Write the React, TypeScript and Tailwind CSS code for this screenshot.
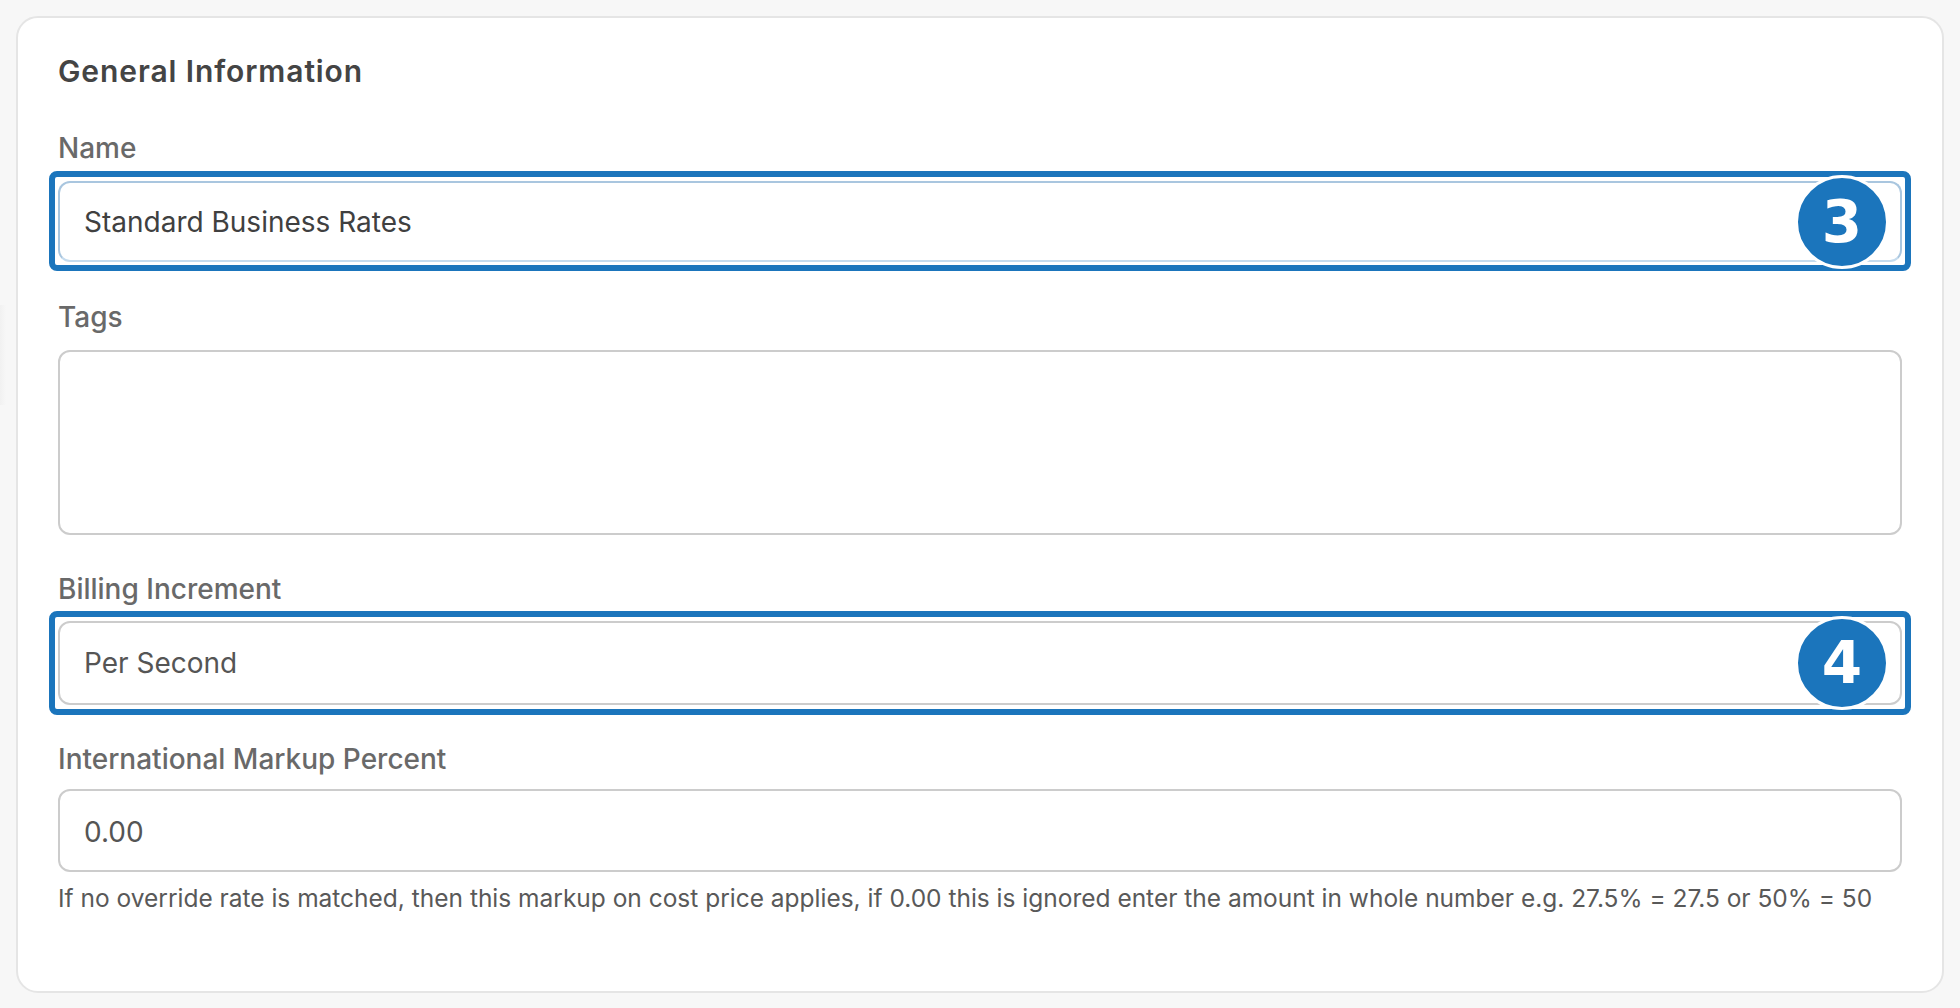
const labelCls = "block text-[28px] font-medium leading-[36px] text-[#696969]";

function Callout({ n, tall }: { n: string; tall?: boolean }) {
  return (
    <>
      <div
        className={`absolute -inset-x-[9px] rounded-[8px] border-[6px] border-[#1b75bc] ${
          tall ? '-top-[10px] -bottom-[10px]' : '-top-[10px] -bottom-[9px]'
        }`}
      />
      <div className="absolute right-[13px] top-1/2 flex h-[94px] w-[94px] -translate-y-1/2 items-center justify-center rounded-full border-[3px] border-white bg-[#1b75bc] font-['DejaVu_Sans',sans-serif] text-[58px] font-bold leading-none text-white">
        {n}
      </div>
    </>
  );
}

export default function App() {
  return (
    <div className="relative min-h-[1008px] bg-[#f7f7f7] p-[16px] font-['Inter',sans-serif]">
      {/* faint edge of something off screen */}
      <div className="absolute left-0 top-[305px] h-[100px] w-[6px] bg-gradient-to-r from-[#f1f1f1] to-[#f7f7f7]" />
      <div className="relative h-[977px] rounded-[22px] border-2 border-[#e5e5e5] bg-white px-[40px] pt-[33px]">
        <h2 className="text-[30px] font-semibold leading-[40px] tracking-[0.9px] text-[#444444]">General Information</h2>

        <div className="mt-[39px]">
          <label className={labelCls}>Name</label>
          <div className="relative mt-[15px]">
            <div className="flex h-[81px] items-center rounded-[12px] border-2 border-[#a9c6df] border-b-[#c4dbee] bg-white px-[24px] text-[28px] text-[#404040]">
              Standard Business Rates
            </div>
            <Callout n="3" />
          </div>
        </div>

        <div className="mt-[37px]">
          <label className={labelCls}>Tags</label>
          <div className="mt-[15px] h-[185px] rounded-[12px] border-2 border-[#cccccc] bg-white" />
        </div>

        <div className="mt-[36px]">
          <label className={labelCls}>Billing Increment</label>
          <div className="relative mt-[14px]">
            <div className="flex h-[84px] items-center rounded-[12px] border-2 border-[#cccccc] bg-white px-[24px] text-[28px] text-[#555555]">
              Per Second
            </div>
            <Callout n="4" tall />
          </div>
        </div>

        <div className="mt-[36px]">
          <label className={labelCls}>International Markup Percent</label>
          <div className="mt-[12px] flex h-[83px] items-center rounded-[12px] border-2 border-[#cccccc] bg-white px-[24px] pt-[2px] text-[28px] text-[#555555]">
            0.00
          </div>
        </div>

        <p className="mt-[9px] text-[24.5px] leading-[34px] tracking-[-0.01px] text-[#595959]">
          If no override rate is matched, then this markup on cost price applies, if 0.00 this is ignored enter the amount in whole number e.g. 27.5% = 27.5 or 50% = 50
        </p>
      </div>
    </div>
  );
}
